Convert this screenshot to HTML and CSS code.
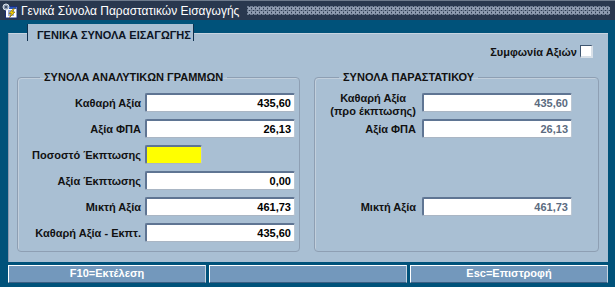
FILE: index.html
```html
<!DOCTYPE html>
<html>
<head>
<meta charset="utf-8">
<link rel="stylesheet" href="styles.css">
</head>
<body>
<div class="window">
  <div class="titlebar">
    <svg class="appicon" width="16" height="16" viewBox="0 0 16 16">
      <rect x="3.5" y="3.5" width="11.5" height="11.5" fill="#ffffff" stroke="#1b2f78"/>
      <rect x="4" y="4" width="10.5" height="2" fill="#2a55b8"/>
      <path d="M6 8h6M6 10h3M6 12h6" stroke="#3a5ab0" stroke-width="1"/>
      <path d="M11.5 5.5 L7 10.5 H9.5 L7.5 14.5 L13 9 H10.5 L12.5 5.5 Z" fill="#f6d400" stroke="#7a5a00" stroke-width="0.6"/>
      <circle cx="4" cy="4" r="3" fill="#8a98ae" stroke="#dfe6ee" stroke-width="1"/>
      <circle cx="4" cy="4" r="1" fill="#2a3a52"/>
    </svg>
    <span class="title">Γενικά Σύνολα Παραστατικών Εισαγωγής</span>
    <div class="dots"></div>
  </div>
  <div class="body">
    <div class="tab">ΓΕΝΙΚΑ ΣΥΝΟΛΑ ΕΙΣΑΓΩΓΗΣ</div>
    <div class="panel">
      <div class="agree">
        <span class="agree-label">Συμφωνία Αξιών</span>
        <span class="check"></span>
      </div>
      <div class="groups">
        <fieldset class="group group-left">
          <legend>ΣΥΝΟΛΑ ΑΝΑΛΥΤΙΚΩΝ ΓΡΑΜΜΩΝ</legend>
          <div class="grid grid-left">
            <span class="lbl">Καθαρή Αξία</span><span class="field">435,60</span>
            <span class="lbl">Αξία ΦΠΑ</span><span class="field">26,13</span>
            <span class="lbl">Ποσοστό Έκπτωσης</span><span class="field field-yellow"></span>
            <span class="lbl">Αξία Έκπτωσης</span><span class="field">0,00</span>
            <span class="lbl">Μικτή Αξία</span><span class="field">461,73</span>
            <span class="lbl">Καθαρή Αξία - Εκπτ.</span><span class="field">435,60</span>
          </div>
        </fieldset>
        <fieldset class="group group-right">
          <legend>ΣΥΝΟΛΑ ΠΑΡΑΣΤΑΤΙΚΟΥ</legend>
          <div class="grid grid-right">
            <span class="lbl lbl-two">Καθαρή Αξία<br>(προ έκπτωσης)</span><span class="field field-ro">435,60</span>
            <span class="lbl">Αξία ΦΠΑ</span><span class="field field-ro">26,13</span>
            <span class="empty"></span><span class="empty"></span>
            <span class="empty"></span><span class="empty"></span>
            <span class="lbl">Μικτή Αξία</span><span class="field field-ro">461,73</span>
          </div>
        </fieldset>
      </div>
    </div>
    <div class="buttons">
      <div class="btn">F10=Εκτέλεση</div>
      <div class="btn"></div>
      <div class="btn">Esc=Επιστροφή</div>
    </div>
  </div>
</div>
</body>
</html>
```

FILE: styles.css
```css
* { box-sizing: border-box; }
html, body { margin: 0; padding: 0; }
body {
  width: 615px;
  height: 287px;
  overflow: hidden;
  background: #00527a;
  font-family: "Liberation Sans", Arial, sans-serif;
}
.window {
  width: 615px;
  height: 287px;
  display: flex;
  flex-direction: column;
}
.titlebar {
  height: 20px;
  background: #29384f;
  border-top: 1px solid #6d7a8c;
  display: flex;
  align-items: center;
  padding-left: 2px;
}
.appicon { flex: none; }
.title {
  color: #ffffff;
  font-size: 12px;
  margin-left: 3px;
  white-space: nowrap;
}
.dots {
  flex: 1;
  height: 9px;
  margin: 0 5px 0 8px;
  background-image:
    conic-gradient(from 90deg at 1px 1px, #8e9bb0 25%, transparent 0),
    conic-gradient(from 90deg at 1px 1px, #6f7d92 25%, transparent 0);
  background-size: 4px 4px, 4px 4px;
  background-position: 0 0, 2px 2px;
}
.body {
  flex: 1;
  padding: 4px 7px 0 8px;
  display: flex;
  flex-direction: column;
}
.tab {
  position: relative;
  z-index: 1;
  align-self: flex-start;
  margin-left: 19px;
  width: 167px;
  height: 17px;
  margin-bottom: -8px;
  background: #a9bfd3;
  border-left: 1px solid #10304e;
  border-right: 1px solid #10304e;
  color: #0c1424;
  font-size: 11px;
  font-weight: bold;
  padding: 6px 0 0 9px;
  line-height: 11px;
  white-space: nowrap;
}
.panel {
  height: 229px;
  background: #a9bfd3;
  border-top: 1px solid #c7d4e1;
  border-left: 1px solid #8d9bb0;
  padding: 11px 9px 10px 8px;
  display: flex;
  flex-direction: column;
}
.agree {
  display: flex;
  justify-content: flex-end;
  align-items: center;
  height: 13px;
  padding-right: 6px;
}
.agree-label {
  font-size: 11px;
  font-weight: bold;
  color: #111111;
  margin-right: 3px;
}
.check {
  width: 13px;
  height: 13px;
  background: #ffffff;
  border-style: solid;
  border-width: 1px 2px 2px 1px;
  border-color: #3f5670 #d8e0e8 #d8e0e8 #3f5670;
}
.groups {
  flex: 1;
  display: flex;
  gap: 14px;
  margin-top: 13px;
}
.group {
  margin: 0;
  min-width: 0;
  border: 1px solid #8e9fb3;
  border-radius: 4px;
  box-shadow: inset 1px 1px 0 #c2cfdc;
  padding: 9px 0 0 0;
}
.group-left { width: 283px; padding-right: 4px; }
.group-right { width: 285px; padding-right: 26px; }
.group legend {
  font-size: 11px;
  font-weight: bold;
  color: #111111;
  padding: 0 4px;
  margin-left: 22px;
  line-height: 13px;
}
.group-right legend { margin-left: 24px; }
.grid {
  display: grid;
  grid-template-rows: repeat(6, 19px);
  row-gap: 7px;
  align-items: center;
}
.grid-left { grid-template-columns: 1fr 150px; column-gap: 4px; }
.grid-right { grid-template-columns: 1fr 150px; column-gap: 6px; grid-template-rows: repeat(5, 19px); }
.lbl {
  font-size: 11px;
  font-weight: bold;
  color: #111111;
  text-align: right;
  white-space: nowrap;
}
.lbl-two {
  text-align: center;
  justify-self: end;
  line-height: 13px;
  margin-top: 5px;
}
.field {
  height: 19px;
  background: #ffffff;
  border-style: solid;
  border-width: 2px 1px 1px 2px;
  border-color: #5f7593 #bcc7d3 #aab6c4 #5f7593;
  border-radius: 2px;
  font-size: 11px;
  font-weight: bold;
  color: #000000;
  text-align: right;
  padding: 2px 3px 0 0;
  line-height: 13px;
}
.field-yellow {
  width: 57px;
  background: #ffff00;
}
.field-ro { color: #5b6b80; }
.buttons {
  display: flex;
  gap: 3px;
  margin-top: 3px;
  height: 18px;
}
.btn {
  flex: 1;
  background: #7398bc;
  border-style: solid;
  border-width: 1px;
  border-color: #ffffff #c6d3e0 #3b5f83 #ffffff;
  color: #ffffff;
  font-size: 11px;
  font-weight: bold;
  text-align: center;
  line-height: 15px;
}
```
